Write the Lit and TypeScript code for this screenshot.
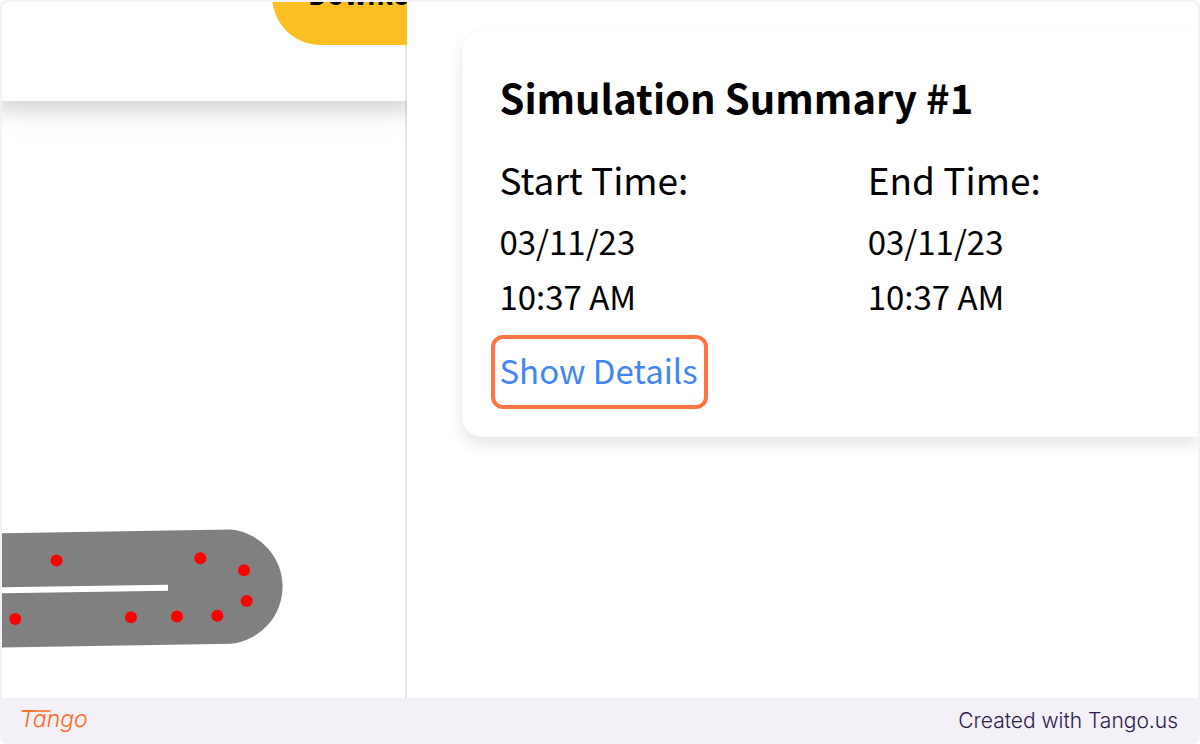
import { LitElement, html, svg, css } from "lit";
import { customElement } from "lit/decorators.js";

@customElement("road-canvas")
class RoadCanvas extends LitElement {
  static styles = css`
    :host { display: flex; min-height: 0; }
    .canvas { display: block; width: 100%; height: 100%; }
    .road { fill: #808080; }
    .divider { stroke: #ffffff; stroke-width: 6; }
    .car { fill: #ff0000; }
  `;

  cars = [
    [54.5, 459.5], [198.3, 457.3], [242, 469.3], [244.7, 500],
    [215.3, 514.8], [175, 515.5], [129, 516.3], [13.3, 518],
  ];

  render() {
    return html`
      <svg class="canvas" role="img" aria-label="Road simulation">
        <path class="road" d="M0 432.3 L229 428.5 A57.4 57.4 0 0 1 229 542.7 L0 546.5 Z" />
        <line class="divider" x1="0" y1="489.3" x2="166" y2="486.8" />
        ${this.cars.map(([x, y]) => svg`<circle class="car" cx=${x} cy=${y} r="6" />`)}
      </svg>
    `;
  }
}

@customElement("summary-card")
class SummaryCard extends LitElement {
  static styles = css`
    :host {
      display: block;
      padding: 39px 0 38px 36px;
      border: 1px solid #fcfcfc;
      border-right: 0;
      border-radius: 20px 0 0 20px;
      background: #fff;
      box-shadow: 0 8px 16px rgba(0, 0, 0, 0.1);
      color: #000;
    }
    .title { margin: 0 0 27px; font-size: 40px; line-height: 54px; font-weight: 600; }
    .times { display: grid; grid-template-columns: 1fr 1fr; gap: 38px; margin: 0; }
    .label { font-size: 37px; line-height: 56px; }
    .value { margin: 7px 0 0; font-size: 33px; line-height: 55px; }
    .line { display: block; }
    .details {
      position: relative;
      display: block;
      margin: 18px 0 0;
      padding: 0;
      border: 0;
      background: none;
      color: #4285f4;
      font: inherit;
      font-size: 33px;
      line-height: 56px;
      cursor: pointer;
    }
    .details::after {
      content: "";
      position: absolute;
      inset: -7px -10px -11px -8px;
      border: 4px solid #ff7442;
      border-radius: 12px;
    }
  `;

  times = [
    { label: "Start Time:", date: "03/11/23", time: "10:37 AM" },
    { label: "End Time:", date: "03/11/23", time: "10:37 AM" },
  ];

  render() {
    return html`
      <h2 class="title">Simulation Summary #1</h2>
      <dl class="times">
        ${this.times.map((t) => html`
          <div>
            <dt class="label">${t.label}</dt>
            <dd class="value">
              <span class="line">${t.date}</span>
              <span class="line">${t.time}</span>
            </dd>
          </div>
        `)}
      </dl>
      <button class="details" type="button">Show Details</button>
    `;
  }
}

@customElement("app-root")
class AppRoot extends LitElement {
  static styles = css`
    :host {
      display: flex;
      flex-direction: column;
      box-sizing: border-box;
      min-height: 100vh;
      padding: 2px 2px 0;
      border-radius: 8px;
      background: #f3f1f7;
      font-family: "Noto Sans CJK SC", "Noto Sans", sans-serif;
    }
    .window {
      flex: 1;
      display: grid;
      grid-template-columns: minmax(0, 339fr) minmax(0, 661fr);
      overflow: hidden;
      border-radius: 8px 8px 0 0;
      background: #fff;
    }
    .stage {
      display: grid;
      grid-template-columns: minmax(0, 1fr);
      grid-template-rows: auto 1fr;
      overflow: hidden;
    }
    .scene { border-right: 2px solid #e6e6e6; }
    .toolbar {
      position: relative;
      display: flex;
      align-items: flex-end;
      box-sizing: border-box;
      height: 99px;
      padding: 0 0 56px 270px;
      background: #fff;
      box-shadow: inset -2px 0 #e6e6e6, 0 4px 16px 6px rgba(0, 0, 0, 0.12), 0 12px 32px 8px rgba(0, 0, 0, 0.04);
    }
    .download {
      flex: none;
      height: 98px;
      padding: 0 36px 6px;
      border: 0;
      border-radius: 49px;
      background: #fbbf24;
      color: #000;
      font: inherit;
      font-size: 27px;
      font-weight: 700;
      white-space: nowrap;
    }
    .panel { padding: 28px 0 28px 55px; overflow: hidden; background: #fff; }
    .footer {
      display: flex;
      align-items: center;
      justify-content: space-between;
      height: 46px;
      padding: 0 20px 0 18px;
    }
    .logo { display: block; }
    .wordmark {
      fill: #ff6a1f;
      font-family: Inter, sans-serif;
      font-size: 23px;
      font-style: italic;
      font-weight: 300;
    }
    .flourish { stroke: #ff6a1f; stroke-width: 1.5; stroke-linecap: round; }
    .credit {
      color: #2b1a4d;
      font-family: Inter, sans-serif;
      font-size: 21px;
      font-weight: 300;
      line-height: 28px;
      text-decoration: none;
    }
  `;

  render() {
    return html`
      <main class="window">
        <section class="stage">
          <header class="toolbar">
            <button class="download" type="button">Download</button>
          </header>
          <road-canvas class="scene"></road-canvas>
        </section>
        <section class="panel">
          <summary-card></summary-card>
        </section>
      </main>
      <footer class="footer">
        <svg class="logo" width="76" height="40" viewBox="0 0 76 40">
          <line class="flourish" x1="2" y1="10" x2="30" y2="10" />
          <text class="wordmark" x="0" y="26">Tango</text>
        </svg>
        <a class="credit" href="#">Created with Tango.us</a>
      </footer>
    `;
  }
}
